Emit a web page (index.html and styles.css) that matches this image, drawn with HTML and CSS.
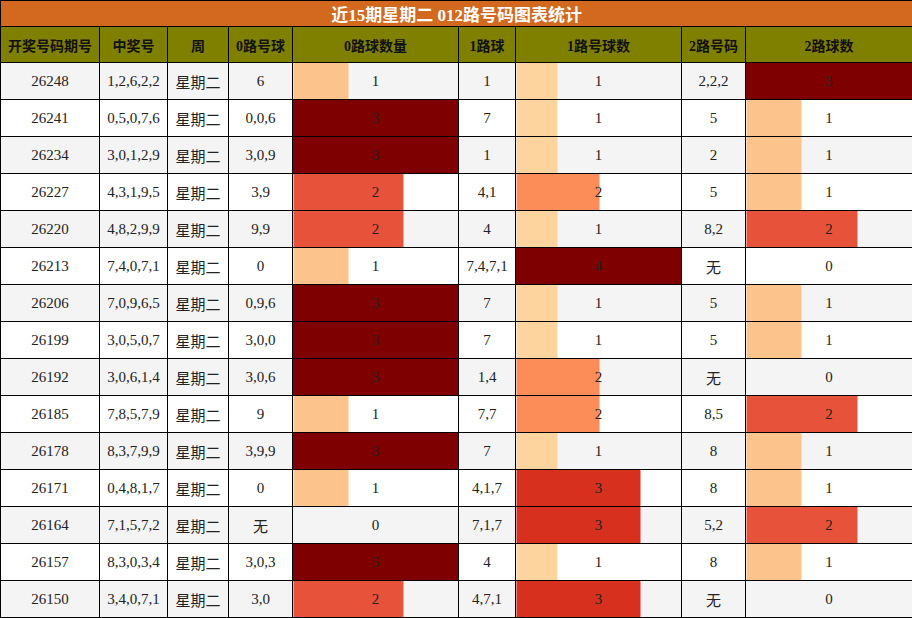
FILE: index.html
```html
<!DOCTYPE html>
<html lang="zh">
<head>
<meta charset="utf-8">
<title>012路号码图表统计</title>
<link rel="stylesheet" href="styles.css">
</head>
<body>
<table class="stats">
  <colgroup>
    <col class="w1"><col class="w2"><col class="w3"><col class="w4"><col class="w5"><col class="w6"><col class="w7"><col class="w8"><col class="w9">
  </colgroup>
  <thead>
    <tr class="title-row"><th colspan="9">近15期星期二 012路号码图表统计</th></tr>
    <tr class="head-row">
      <th>开奖号码期号</th><th>中奖号</th><th>周</th><th>0路号球</th><th>0路球数量</th><th>1路球</th><th>1路号球数</th><th>2路号码</th><th>2路球数</th>
    </tr>
  </thead>
  <tbody>
    <tr class="odd"><td>26248</td><td>1,2,6,2,2</td><td class="cjk">星期二</td><td>6</td><td class="bar a1" style="--w:33.33%">1</td><td>1</td><td class="bar b1" style="--w:25%">1</td><td>2,2,2</td><td class="bar a3" style="--w:100%">3</td></tr>
    <tr><td>26241</td><td>0,5,0,7,6</td><td class="cjk">星期二</td><td>0,0,6</td><td class="bar a3" style="--w:100%">3</td><td>7</td><td class="bar b1" style="--w:25%">1</td><td>5</td><td class="bar a1" style="--w:33.33%">1</td></tr>
    <tr class="odd"><td>26234</td><td>3,0,1,2,9</td><td class="cjk">星期二</td><td>3,0,9</td><td class="bar a3" style="--w:100%">3</td><td>1</td><td class="bar b1" style="--w:25%">1</td><td>2</td><td class="bar a1" style="--w:33.33%">1</td></tr>
    <tr><td>26227</td><td>4,3,1,9,5</td><td class="cjk">星期二</td><td>3,9</td><td class="bar a2" style="--w:66.67%">2</td><td>4,1</td><td class="bar b2" style="--w:50%">2</td><td>5</td><td class="bar a1" style="--w:33.33%">1</td></tr>
    <tr class="odd"><td>26220</td><td>4,8,2,9,9</td><td class="cjk">星期二</td><td>9,9</td><td class="bar a2" style="--w:66.67%">2</td><td>4</td><td class="bar b1" style="--w:25%">1</td><td>8,2</td><td class="bar a2" style="--w:66.67%">2</td></tr>
    <tr><td>26213</td><td>7,4,0,7,1</td><td class="cjk">星期二</td><td>0</td><td class="bar a1" style="--w:33.33%">1</td><td>7,4,7,1</td><td class="bar b4" style="--w:100%">4</td><td class="cjk">无</td><td>0</td></tr>
    <tr class="odd"><td>26206</td><td>7,0,9,6,5</td><td class="cjk">星期二</td><td>0,9,6</td><td class="bar a3" style="--w:100%">3</td><td>7</td><td class="bar b1" style="--w:25%">1</td><td>5</td><td class="bar a1" style="--w:33.33%">1</td></tr>
    <tr><td>26199</td><td>3,0,5,0,7</td><td class="cjk">星期二</td><td>3,0,0</td><td class="bar a3" style="--w:100%">3</td><td>7</td><td class="bar b1" style="--w:25%">1</td><td>5</td><td class="bar a1" style="--w:33.33%">1</td></tr>
    <tr class="odd"><td>26192</td><td>3,0,6,1,4</td><td class="cjk">星期二</td><td>3,0,6</td><td class="bar a3" style="--w:100%">3</td><td>1,4</td><td class="bar b2" style="--w:50%">2</td><td class="cjk">无</td><td>0</td></tr>
    <tr><td>26185</td><td>7,8,5,7,9</td><td class="cjk">星期二</td><td>9</td><td class="bar a1" style="--w:33.33%">1</td><td>7,7</td><td class="bar b2" style="--w:50%">2</td><td>8,5</td><td class="bar a2" style="--w:66.67%">2</td></tr>
    <tr class="odd"><td>26178</td><td>8,3,7,9,9</td><td class="cjk">星期二</td><td>3,9,9</td><td class="bar a3" style="--w:100%">3</td><td>7</td><td class="bar b1" style="--w:25%">1</td><td>8</td><td class="bar a1" style="--w:33.33%">1</td></tr>
    <tr><td>26171</td><td>0,4,8,1,7</td><td class="cjk">星期二</td><td>0</td><td class="bar a1" style="--w:33.33%">1</td><td>4,1,7</td><td class="bar b3" style="--w:75%">3</td><td>8</td><td class="bar a1" style="--w:33.33%">1</td></tr>
    <tr class="odd"><td>26164</td><td>7,1,5,7,2</td><td class="cjk">星期二</td><td class="cjk">无</td><td>0</td><td>7,1,7</td><td class="bar b3" style="--w:75%">3</td><td>5,2</td><td class="bar a2" style="--w:66.67%">2</td></tr>
    <tr><td>26157</td><td>8,3,0,3,4</td><td class="cjk">星期二</td><td>3,0,3</td><td class="bar a3" style="--w:100%">3</td><td>4</td><td class="bar b1" style="--w:25%">1</td><td>8</td><td class="bar a1" style="--w:33.33%">1</td></tr>
    <tr class="odd"><td>26150</td><td>3,4,0,7,1</td><td class="cjk">星期二</td><td>3,0</td><td class="bar a2" style="--w:66.67%">2</td><td>4,7,1</td><td class="bar b3" style="--w:75%">3</td><td class="cjk">无</td><td>0</td></tr>
  </tbody>
</table>
</body>
</html>
```
FILE: styles.css
```css
html, body {
  margin: 0;
  padding: 0;
  background: #ffffff;
}

.stats {
  border-collapse: collapse;
  table-layout: fixed;
  width: 912px;
  font-family: "Liberation Serif", "Noto Sans CJK SC", serif;
  font-size: 15px;
  color: #222222;
}

.w1 { width: 99px; }
.w2 { width: 68px; }
.w3 { width: 61px; }
.w4 { width: 64px; }
.w5 { width: 166px; }
.w6 { width: 57px; }
.w7 { width: 166px; }
.w8 { width: 64px; }
.w9 { width: 167px; }

.stats th,
.stats td {
  border: 1px solid #000000;
  padding: 0;
  text-align: center;
  vertical-align: middle;
}

.title-row th {
  background: #d2691e;
  color: #ffffff;
  font-size: 17px;
  font-weight: bold;
  height: 25px;
}

.head-row th {
  background: #808000;
  color: #111111;
  font-size: 14px;
  font-weight: bold;
  height: 35px;
}

.stats td {
  height: 36px;
  background-color: #ffffff;
}

.stats tr.odd td {
  background-color: #f4f4f4;
}

.stats td.cjk {
  font-family: "Noto Sans CJK SC", sans-serif;
  font-size: 15px;
}

.stats td.bar {
  background-image: linear-gradient(to right, var(--c) var(--w), transparent var(--w));
}

.a1 { --c: #fdc38d; }
.a2 { --c: #e7533a; }
.a3 { --c: #7f0000; }
.b1 { --c: #fdd49e; }
.b2 { --c: #fc8d59; }
.b3 { --c: #d7301f; }
.b4 { --c: #7f0000; }
```
